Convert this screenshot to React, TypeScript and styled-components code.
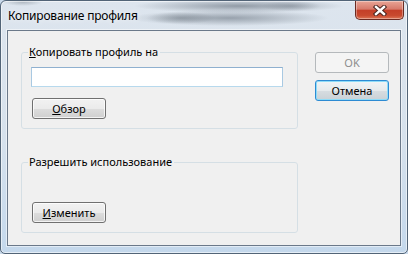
import styled, { createGlobalStyle } from "styled-components";

const GlobalStyle = createGlobalStyle`
  html, body {
    margin: 0;
    padding: 0;
    background: #c9d9ea;
  }
  body {
    font-family: "Noto Sans", "Liberation Sans", sans-serif;
    font-size: 11px;
    color: #000;
  }
`;

// рамка окна с "стеклом" aero
const Window = styled.div`
  width: 408px;
  height: 254px;
  box-sizing: border-box;
  display: flex;
  flex-direction: column;
  padding: 0 6px 7px 6px;
  border: 1px solid #526477;
  border-radius: 6px 6px 5px 5px;
  overflow: hidden;
  box-shadow: inset 0 0 0 1px rgba(255, 255, 255, 0.55);
  background:
    radial-gradient(ellipse 105px 7px at 238px 5px, rgba(95, 106, 118, 0.6), transparent),
    radial-gradient(ellipse 100px 8px at 228px 17px, rgba(95, 106, 118, 0.55), transparent),
    radial-gradient(ellipse 35px 6px at 180px 17px, rgba(70, 80, 90, 0.35), transparent),
    radial-gradient(ellipse 30px 5px at 290px 5px, rgba(70, 80, 90, 0.3), transparent),
    radial-gradient(ellipse 20px 4px at 22px 1px, rgba(90, 100, 110, 0.35), transparent),
    linear-gradient(to bottom, #dde5ee 0%, #d6e1ec 55%, #c4d8ec 100%);
`;

const TitleBar = styled.div`
  height: 29px;
  margin: 0 -6px;
  padding-left: 7px;
  display: flex;
  align-items: center;
`;

const Title = styled.span`
  flex: 1;
  font-size: 12px;
  letter-spacing: -0.2px;
  text-shadow: 0 0 6px rgba(255, 255, 255, 0.9);
`;

const CloseButton = styled.div`
  align-self: flex-start;
  width: 49px;
  height: 19px;
  margin-right: 3px;
  box-sizing: border-box;
  border: 1px solid #6b2b22;
  border-top: none;
  border-radius: 0 0 5px 5px;
  display: flex;
  align-items: center;
  justify-content: center;
  background: linear-gradient(
    to bottom,
    #e9a596 0%,
    #d7796a 45%,
    #c43f28 52%,
    #c8492e 80%,
    #dd7556 100%
  );
  box-shadow: inset 0 0 0 1px rgba(255, 255, 255, 0.35);
`;

const Client = styled.div`
  flex: 1;
  display: flex;
  gap: 17px;
  padding: 13px 0 0 13px;
  border: 1px solid #6b798a;
  background: #f0f0f0;
  box-shadow: 0 0 0 1px rgba(255, 255, 255, 0.5);
`;

const LeftColumn = styled.div`
  width: 277px;
  display: flex;
  flex-direction: column;
  gap: 25px;
`;

const RightColumn = styled.div`
  display: flex;
  flex-direction: column;
  gap: 7px;
  padding-top: 8px;
`;

const GroupBox = styled.fieldset`
  margin: 0;
  min-width: 0;
  box-sizing: border-box;
  padding: 0 10px 9px 10px;
  border: 1px solid #d5dfe5;
  border-radius: 3px;
`;

const Legend = styled.legend`
  margin-left: -4px;
  padding: 0 2px 0 1px;
  line-height: 16px;
`;

const TextBox = styled.input`
  display: block;
  box-sizing: border-box;
  width: 252px;
  height: 20px;
  margin: 7px 0 0 -1px;
  border: 1px solid;
  border-color: #8fb0cf #a9c9e2 #b7d9ed #a9c9e2;
  background: #fff;
  outline: none;
`;

const Button = styled.button<{ $kind?: "normal" | "default" | "disabled"; $top?: number }>`
  display: block;
  box-sizing: border-box;
  width: 74px;
  height: 21px;
  margin-top: ${(p) => p.$top ?? 0}px;
  padding: 0;
  font: inherit;
  line-height: 17px;
  border-radius: 3px;
  border: 1px solid
    ${(p) => (p.$kind === "disabled" ? "#b5b9bc" : p.$kind === "default" ? "#2d8bd3" : "#707070")};
  color: ${(p) => (p.$kind === "disabled" ? "#8d8d8d" : "#000")};
  background: ${(p) =>
    p.$kind === "disabled"
      ? "#f4f4f4"
      : p.$kind === "default"
      ? "linear-gradient(to bottom, #f0f4f6 0%, #e6eaec 50%, #d7dde1 51%, #c9d1d6 100%)"
      : "linear-gradient(to bottom, #f2f2f2 0%, #ebebeb 50%, #dddddd 51%, #cfcfcf 100%)"};
  box-shadow: ${(p) =>
    p.$kind === "disabled"
      ? "none"
      : p.$kind === "default"
      ? "inset 0 0 0 1px #8edcf8"
      : "inset 0 0 0 1px rgba(255, 255, 255, 0.75)"};
`;

const CloseIcon = () => (
  <svg width="14" height="11" viewBox="0 0 14 11">
    <path d="M3 2 L11 9 M11 2 L3 9" stroke="#4a2520" strokeWidth="4.4" strokeLinecap="square" fill="none" />
    <path d="M3 2 L11 9 M11 2 L3 9" stroke="#fff" strokeWidth="2.4" strokeLinecap="square" fill="none" />
  </svg>
);

const App = () => {
  return (
    <>
      <GlobalStyle />
      <Window>
        <TitleBar>
          <Title>Копирование профиля</Title>
          <CloseButton>
            <CloseIcon />
          </CloseButton>
        </TitleBar>
        <Client>
          <LeftColumn>
            <GroupBox>
              <Legend>
                <u>К</u>опировать профиль на
              </Legend>
              <TextBox />
              <Button $top={11}>
                <u>О</u>бзор
              </Button>
            </GroupBox>
            <GroupBox>
              <Legend>Разрешить использование</Legend>
              <Button $top={32}>
                <u>И</u>зменить
              </Button>
            </GroupBox>
          </LeftColumn>
          <RightColumn>
            <Button $kind="disabled">OK</Button>
            <Button $kind="default">Отмена</Button>
          </RightColumn>
        </Client>
      </Window>
    </>
  );
};

export default App;
